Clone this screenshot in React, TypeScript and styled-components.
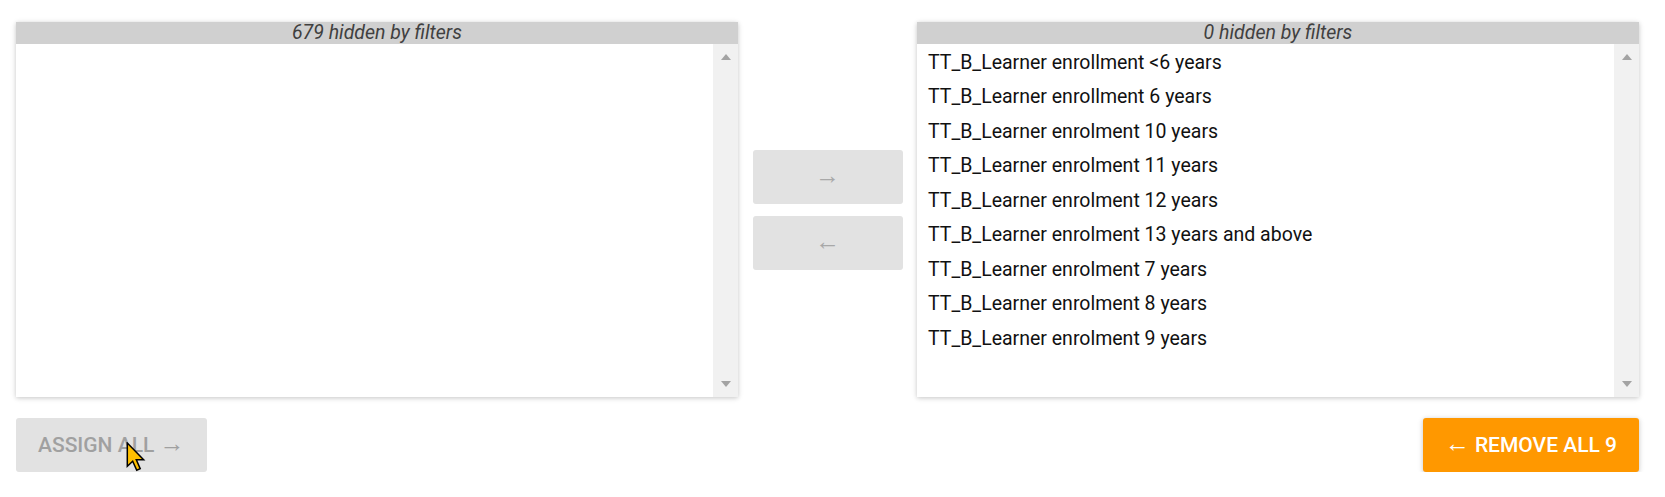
import React from 'react';
import styled, { createGlobalStyle } from 'styled-components';

const GlobalStyle = createGlobalStyle`
    html, body {
        margin: 0;
        padding: 0;
        background: #ffffff;
        font-family: Roboto, 'Liberation Sans', sans-serif;
    }
`;

const Page = styled.div`
    padding: 22px 26px 0 16px;
`;

const Lists = styled.div`
    display: flex;
    align-items: stretch;
`;

const Panel = styled.div`
    width: 722px;
    height: 375px;
    display: flex;
    flex-direction: column;
    background: #ffffff;
    box-shadow: 0 1px 6px rgba(0, 0, 0, 0.12), 0 1px 4px rgba(0, 0, 0, 0.12);
`;

const PanelHeader = styled.div`
    height: 22px;
    flex-shrink: 0;
    background: #d0d0d0;
    color: #404040;
    font-size: 19.5px;
    font-style: italic;
    line-height: 22px;
    text-align: center;
`;

const PanelBody = styled.div`
    flex: 1;
    display: flex;
    min-height: 0;
`;

const ItemList = styled.ul`
    flex: 1;
    margin: 0;
    padding: 1.5px 0 0 0;
    list-style: none;
`;

const Item = styled.li`
    padding: 0 11px;
    font-size: 19.5px;
    line-height: 34.5px;
    color: #111111;
    white-space: nowrap;
`;

const Scrollbar = styled.div`
    width: 25px;
    flex-shrink: 0;
    background: #f1f1f1;
    display: flex;
    flex-direction: column;
    justify-content: space-between;
    align-items: center;
    padding: 10px 0 10px;
    box-sizing: border-box;
`;

const ScrollArrow = styled.span<{ $down?: boolean }>`
    width: 0;
    height: 0;
    border-left: 5.5px solid transparent;
    border-right: 5.5px solid transparent;
    ${(p) =>
        p.$down
            ? 'border-top: 6px solid #a3a3a3;'
            : 'border-bottom: 6px solid #a3a3a3;'}
`;

const Middle = styled.div`
    flex: 1;
    display: flex;
    flex-direction: column;
    align-items: center;
    justify-content: center;
    gap: 12px;
`;

const MoveButton = styled.button`
    width: 150px;
    height: 54px;
    border: none;
    border-radius: 3px;
    background: #e2e2e2;
    color: #a8a8a8;
    font-family: Roboto, 'Liberation Sans', sans-serif;
    font-size: 21px;
    padding: 0;
    cursor: default;
`;

const Arrow = styled.span`
    font-size: 25px;
    font-weight: 400;
    line-height: 0;
`;

const Actions = styled.div`
    display: flex;
    justify-content: space-between;
    margin-top: 21px;
`;

const ActionButton = styled.button<{ $primary?: boolean }>`
    position: relative;
    height: 54px;
    border: none;
    border-radius: 3px;
    padding: 0 22px;
    font-family: Roboto, 'Liberation Sans', sans-serif;
    font-size: 21px;
    font-weight: 500;
    letter-spacing: 0;
    text-transform: uppercase;
    background: ${(p) => (p.$primary ? '#ff9800' : '#e2e2e2')};
    color: ${(p) => (p.$primary ? '#ffffff' : '#a0a0a0')};
    box-shadow: ${(p) =>
        p.$primary
            ? '0 1px 6px rgba(0, 0, 0, 0.12), 0 1px 4px rgba(0, 0, 0, 0.12)'
            : 'none'};
    cursor: default;
`;

const Pointer = styled.svg`
    position: absolute;
    left: 110px;
    top: 24px;
    width: 20px;
    height: 30px;
    pointer-events: none;
`;

const assigned = [
    'TT_B_Learner enrollment <6 years',
    'TT_B_Learner enrollment 6 years',
    'TT_B_Learner enrolment 10 years',
    'TT_B_Learner enrolment 11 years',
    'TT_B_Learner enrolment 12 years',
    'TT_B_Learner enrolment 13 years and above',
    'TT_B_Learner enrolment 7 years',
    'TT_B_Learner enrolment 8 years',
    'TT_B_Learner enrolment 9 years',
];

const ListPanel = ({ hidden, items }: { hidden: number; items: string[] }) => (
    <Panel>
        <PanelHeader>{hidden} hidden by filters</PanelHeader>
        <PanelBody>
            <ItemList>
                {items.map((item) => (
                    <Item key={item}>{item}</Item>
                ))}
            </ItemList>
            <Scrollbar>
                <ScrollArrow />
                <ScrollArrow $down />
            </Scrollbar>
        </PanelBody>
    </Panel>
);

export default function App() {
    return (
        <>
            <GlobalStyle />
            <Page>
                <Lists>
                    <ListPanel hidden={679} items={[]} />
                    <Middle>
                        <MoveButton>
                            <Arrow>→</Arrow>
                        </MoveButton>
                        <MoveButton>
                            <Arrow>←</Arrow>
                        </MoveButton>
                    </Middle>
                    <ListPanel hidden={0} items={assigned} />
                </Lists>
                <Actions>
                    <ActionButton>
                        Assign all <Arrow>→</Arrow>
                        <Pointer viewBox="0 0 13 20">
                            <path
                                d="M0.7 0.7 L0.7 16.2 L4.3 12.8 L7 18.8 L9.3 17.8 L6.7 11.9 L11.6 11.9 Z"
                                fill="#ffc000"
                                stroke="#000000"
                                strokeWidth="1"
                                strokeLinejoin="miter"
                            />
                        </Pointer>
                    </ActionButton>
                    <ActionButton $primary>
                        <Arrow>←</Arrow> Remove all 9
                    </ActionButton>
                </Actions>
            </Page>
        </>
    );
}
